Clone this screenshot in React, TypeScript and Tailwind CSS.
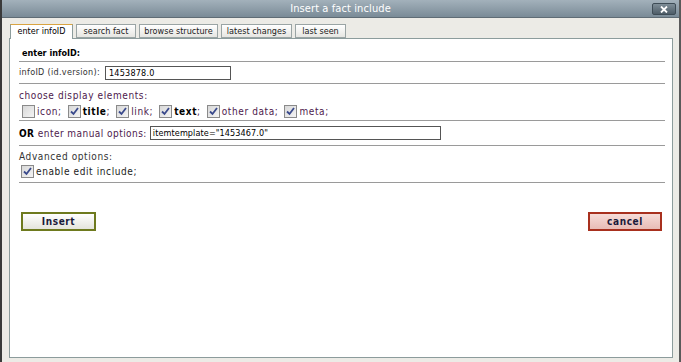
import React from "react";

const F = { fontFamily: '"DejaVu Sans Condensed", "DejaVu Sans", sans-serif' };

function Check({ on }: { on: boolean }) {
  return (
    <span className="inline-flex w-[13px] h-[13px] border border-[#8a8a8a] bg-gradient-to-br from-[#d8d8d8] to-[#f4f4f4] items-center justify-center shrink-0">
      {on && (
        <svg width="9" height="9" viewBox="0 0 9 9">
          <path d="M1 4.5 L3.5 7 L8 1" fill="none" stroke="#3a4a8c" strokeWidth="1.8" />
        </svg>
      )}
    </span>
  );
}

function Sep() {
  return <div className="h-px bg-[#9a9a9a] mr-[7px]" />;
}

const tabs: [string, string][] = [
  ["enter infoID", "w-[63px]"],
  ["search fact", "w-[60px]"],
  ["browse structure", "w-[79px]"],
  ["latest changes", "w-[71px]"],
  ["last seen", "w-[51px]"],
];

export default function App() {
  return (
    <div style={F} className="w-[681px] h-[362px] bg-[#ecebe6] border-l-2 border-r-2 border-l-[#3a3a3a] border-r-[#5a5a5a] flex flex-col overflow-hidden relative">
      <div className="h-[18px] shrink-0 bg-gradient-to-b from-[#a3b1bb] to-[#7a8b97] border-b border-[#5f6c75] flex items-center justify-center relative">
        <span className="text-white text-[11px] leading-none tracking-[0.1px]">Insert a fact include</span>
        <div className="absolute right-[3px] top-[3px] w-[24px] h-[12px] rounded-[2px] border border-[#3e4c56] bg-gradient-to-b from-[#7f8e98] to-[#4e5d68] flex items-center justify-center">
          <svg width="8" height="7" viewBox="0 0 8 7">
            <path d="M1 0.5 L7 6.5 M7 0.5 L1 6.5" stroke="#ffffff" strokeWidth="1.8" />
          </svg>
        </div>
      </div>
      <div className="flex-1 flex flex-col pl-[7px] pr-[6px] pt-[6px] pb-[4px]">
        <div className="flex h-[14px] pl-px gap-[3px] relative z-10">
          {tabs.map(([t, w], i) => (
            <div
              key={t}
              className={
                (i === 0
                  ? "h-[15px] bg-white border border-b-0 border-[#8c9c9c] border-t-[#d9a441] text-[9px] leading-[13px] text-black"
                  : "h-[14px] bg-gradient-to-b from-[#ffffff] to-[#e6e6e2] border border-[#9aa4a4] text-[9px] leading-[12px] text-[#222]") +
                " text-center whitespace-nowrap shrink-0 " +
                w
              }
            >
              {t}
            </div>
          ))}
        </div>
        <div className="flex-1 bg-white border border-[#8c9c9c] pl-[9px] flex flex-col text-[10px] text-[#222] tracking-[0.6px]">
          <div className="h-[22px] pl-[3px] pt-[8px] font-bold text-[9px] leading-[13px] text-black tracking-[0px]">enter infoID:</div>
          <Sep />
          <div className="h-[21px] flex items-center">
            <span className="text-[9px] text-[#333] w-[86px] tracking-[0.3px]">infoID (id.version):</span>
            <div className="w-[126px] h-[14px] border border-[#555] bg-white text-[9px] leading-[12px] pl-[3px] text-black tracking-[0.2px]">1453878.0</div>
          </div>
          <Sep />
          <div className="h-[36px] flex flex-col pt-[5px]">
            <div className="leading-[13px] text-[#4d1a4d]">choose display elements:</div>
            <div className="flex items-center h-[13px] mt-[3px] pl-[3px] text-[#4d1a4d]">
              <Check on={false} />
              <span className="ml-[2px] mr-[6px]">icon;</span>
              <Check on={true} />
              <span className="ml-[2px] mr-[6px]"><b className="text-black">title</b>;</span>
              <Check on={true} />
              <span className="ml-[2px] mr-[6px]">link;</span>
              <Check on={true} />
              <span className="ml-[2px] mr-[6px]"><b className="text-black">text</b>;</span>
              <Check on={true} />
              <span className="ml-[2px] mr-[6px]">other data;</span>
              <Check on={true} />
              <span className="ml-[2px]">meta;</span>
            </div>
          </div>
          <Sep />
          <div className="h-[24px] flex items-center">
            <span className="text-[#4d1a4d] tracking-[0.45px] mr-[3px]"><b className="text-black">OR</b> enter manual options:</span>
            <div className="w-[291px] h-[14px] border border-[#555] bg-white text-[9px] leading-[12px] pl-[2px] text-black tracking-[0.1px]">itemtemplate="1453467.0"</div>
          </div>
          <Sep />
          <div className="h-[36px] flex flex-col pt-[4px]">
            <div className="leading-[13px] text-[#333]">Advanced options:</div>
            <div className="flex items-center h-[13px] mt-[2px] pl-[2px] text-[#222]">
              <Check on={true} />
              <span className="ml-[2px]">enable edit include;</span>
            </div>
          </div>
          <Sep />
          <div className="flex justify-between mt-[29px] pl-[2px] pr-[10px]">
            <button className="w-[75px] h-[19px] border-2 border-[#6e7a1e] bg-gradient-to-b from-[#ffffff] to-[#e4e4dc] text-[10px] font-bold text-[#1a1a3a] leading-none">Insert</button>
            <button className="w-[74px] h-[19px] border-2 border-[#a8301e] bg-gradient-to-b from-[#f6dcd8] to-[#e8bcb6] text-[10px] font-bold text-[#1a1a3a] leading-none">cancel</button>
          </div>
        </div>
      </div>
    </div>
  );
}
